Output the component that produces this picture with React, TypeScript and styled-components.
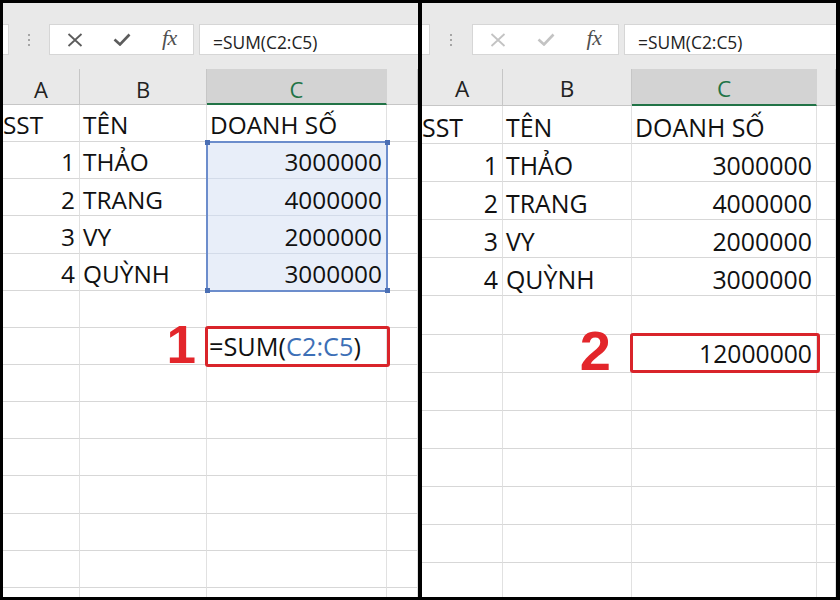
import React from 'react'
import styled, { createGlobalStyle, css } from 'styled-components'

const GlobalStyle = createGlobalStyle`
  html, body {
    margin: 0;
    padding: 0;
    background: #000;
  }
  * {
    box-sizing: border-box;
  }
`

const Frame = styled.div`
  width: 840px;
  height: 600px;
  display: flex;
  gap: 4px;
  padding: 3px 4px 3px 3px;
  background: #000;
  overflow: hidden;
`

const Panel = styled.div<{ $w: number }>`
  width: ${(p) => p.$w}px;
  flex: none;
  display: flex;
  flex-direction: column;
  background: #fff;
  overflow: hidden;
  font-family: 'Open Sans', 'Noto Sans', sans-serif;
  color: #111;
`

const FormulaBar = styled.div`
  height: 66px;
  flex: none;
  display: flex;
  align-items: flex-start;
  padding-top: 21px;
  background: #e9e9e9;
`

const NameStub = styled.div<{ $w: number }>`
  width: ${(p) => p.$w}px;
  height: 31px;
  flex: none;
  background: #fff;
  border: 1px solid #d6d6d6;
  border-left: none;
`

const Grip = styled.div<{ $w: number }>`
  width: ${(p) => p.$w}px;
  height: 31px;
  flex: none;
  display: flex;
  flex-direction: column;
  align-items: center;
  justify-content: center;
  gap: 3px;
  span {
    width: 2px;
    height: 2px;
    background: #a5a5a5;
  }
`

const IconBox = styled.div<{ $w: number }>`
  width: ${(p) => p.$w}px;
  height: 31px;
  flex: none;
  display: flex;
  align-items: center;
  padding-left: 1px;
  background: #fff;
  border: 1px solid #d6d6d6;
`

const IconSlot = styled.div`
  width: 48px;
  height: 100%;
  display: flex;
  align-items: center;
  justify-content: center;
`

const Fx = styled.span`
  font-family: 'Liberation Serif', 'Times New Roman', serif;
  font-style: italic;
  font-size: 22px;
  color: #505050;
  padding-bottom: 3px;
  letter-spacing: -0.5px;
`

const FormulaInput = styled.div`
  flex: 1;
  height: 31px;
  margin-left: 5px;
  display: flex;
  align-items: center;
  padding: 4px 0 0 13px;
  background: #fff;
  border: 1px solid #d6d6d6;
  border-right: none;
  font-size: 17.4px;
  color: #222;
  white-space: nowrap;
`

const HeaderRow = styled.div<{ $cols: string; $h: number }>`
  height: ${(p) => p.$h}px;
  flex: none;
  display: grid;
  grid-template-columns: ${(p) => p.$cols};
  background: #e9e9e9;
`

const ColHead = styled.div<{ $active?: boolean; $fs: number }>`
  display: flex;
  align-items: flex-end;
  justify-content: center;
  padding-bottom: 4.5px;
  font-size: ${(p) => p.$fs}px;
  line-height: 1;
  color: #222;
  border-right: 1px solid #c6c6c6;
  border-bottom: 1px solid #c6c6c6;
  ${(p) =>
    p.$active &&
    css`
      background: #d3d3d3;
      color: #217346;
      border-right-color: #d3d3d3;
      border-bottom: 2px solid #217346;
      padding-bottom: 3.5px;
    `}
`

const Sheet = styled.div<{ $cols: string; $row: number; $fs: number }>`
  flex: 1;
  min-height: 0;
  display: grid;
  grid-template-columns: ${(p) => p.$cols};
  grid-auto-rows: ${(p) => p.$row}px;
  align-content: start;
  overflow: hidden;
  font-size: ${(p) => p.$fs}px;
`

const Cell = styled.div<{
  $r: number
  $c: number
  $align?: 'left' | 'right'
  $padL?: number
  $sel?: boolean
}>`
  grid-row: ${(p) => p.$r};
  grid-column: ${(p) => p.$c};
  position: relative;
  display: flex;
  align-items: flex-end;
  justify-content: ${(p) => (p.$align === 'right' ? 'flex-end' : 'flex-start')};
  padding: 0 4px 3.5px ${(p) => p.$padL ?? 3}px;
  line-height: 1;
  white-space: nowrap;
  border-right: 1px solid #e1e1e1;
  border-bottom: 1px solid #d7d7d7;
  ${(p) =>
    p.$sel &&
    css`
      background: #e8eef9;
      border-bottom-color: #d3dbe9;
    `}
`

const Selection = styled.div<{ $area: string }>`
  grid-area: ${(p) => p.$area};
  position: relative;
  z-index: 1;
  margin: -1px -1px -1px -1px;
  border: 2px solid #6c8dcc;
  pointer-events: none;
`

const Handle = styled.span<{ $v: 'top' | 'bottom'; $h: 'left' | 'right' }>`
  position: absolute;
  ${(p) => p.$v}: -3.5px;
  ${(p) => p.$h}: -3.5px;
  width: 5px;
  height: 5px;
  background: #4b6fb4;
`

const Marker = styled.span<{ $fs: number; $mr: number }>`
  position: relative;
  z-index: 2;
  align-self: center;
  margin-right: ${(p) => p.$mr}px;
  font-family: 'Liberation Sans', Arial, sans-serif;
  font-weight: 700;
  font-size: ${(p) => p.$fs}px;
  line-height: 1;
  color: #e3262b;
`

const RedFrame = styled.span<{ $inset: string }>`
  position: absolute;
  inset: ${(p) => p.$inset};
  z-index: 2;
  border: 3px solid #d9242a;
  border-radius: 3px;
  pointer-events: none;
`

const EditText = styled.span<{ $fs: number }>`
  font-size: ${(p) => p.$fs}px;
  padding-bottom: 1px;
`

const Ref = styled.span`
  color: #3d6fb6;
`

const CrossIcon = ({ color }: { color: string }) => (
  <svg width="16" height="14" viewBox="0 0 16 14">
    <path d="M1.5 1 L14.5 13 M14.5 1 L1.5 13" stroke={color} strokeWidth="1.8" fill="none" />
  </svg>
)

const CheckIcon = ({ color }: { color: string }) => (
  <svg width="18" height="13" viewBox="0 0 18 13">
    <path d="M1.5 6.5 L7 11.5 L16.5 1.5" stroke={color} strokeWidth="2.6" fill="none" strokeLinejoin="miter" />
  </svg>
)

type PanelConfig = {
  w: number
  stub: number
  grip: number
  iconBox: number
  iconColor: string
  cols: string
  headH: number
  headFs: number
  rowH: number
  fs: number
  rows: number
  selection?: boolean
  marker: string
  markerFs: number
  markerMr: number
  frameInset: string
  result: React.ReactNode
  resultAlign: 'left' | 'right'
  resultPadL: number
}

const data = [
  ['SST', 'TÊN', 'DOANH SỐ'],
  ['1', 'THẢO', '3000000'],
  ['2', 'TRANG', '4000000'],
  ['3', 'VY', '2000000'],
  ['4', 'QUỲNH', '3000000'],
]

const SheetPanel: React.FC<{ cfg: PanelConfig }> = ({ cfg }) => {
  const cells: React.ReactNode[] = []
  for (let r = 1; r <= cfg.rows; r++) {
    const row = data[r - 1]
    for (let c = 1; c <= 4; c++) {
      const key = `${r}-${c}`
      if (row && c < 4) {
        const isNum = r > 1 && c !== 2
        const sel = cfg.selection && r > 1 && c === 3
        cells.push(
          <Cell
            key={key}
            $r={r}
            $c={c}
            $align={isNum ? 'right' : 'left'}
            $padL={c === 1 ? 0 : 3}
            $sel={sel}
          >
            {row[c - 1]}
          </Cell>
        )
      } else if (r === 7 && c === 2) {
        cells.push(
          <Cell key={key} $r={r} $c={c} $align="right">
            <Marker $fs={cfg.markerFs} $mr={cfg.markerMr}>
              {cfg.marker}
            </Marker>
          </Cell>
        )
      } else if (r === 7 && c === 3) {
        cells.push(
          <Cell key={key} $r={r} $c={c} $align={cfg.resultAlign} $padL={cfg.resultPadL}>
            {cfg.result}
            <RedFrame $inset={cfg.frameInset} />
          </Cell>
        )
      } else {
        cells.push(<Cell key={key} $r={r} $c={c} />)
      }
    }
  }

  return (
    <Panel $w={cfg.w}>
      <FormulaBar>
        <NameStub $w={cfg.stub} />
        <Grip $w={cfg.grip}>
          <span />
          <span />
          <span />
        </Grip>
        <IconBox $w={cfg.iconBox}>
          <IconSlot>
            <CrossIcon color={cfg.iconColor} />
          </IconSlot>
          <IconSlot>
            <CheckIcon color={cfg.iconColor} />
          </IconSlot>
          <IconSlot>
            <Fx>fx</Fx>
          </IconSlot>
        </IconBox>
        <FormulaInput>=SUM(C2:C5)</FormulaInput>
      </FormulaBar>
      <HeaderRow $cols={cfg.cols} $h={cfg.headH}>
        <ColHead $fs={cfg.headFs}>A</ColHead>
        <ColHead $fs={cfg.headFs}>B</ColHead>
        <ColHead $fs={cfg.headFs} $active>
          C
        </ColHead>
        <ColHead $fs={cfg.headFs} />
      </HeaderRow>
      <Sheet $cols={cfg.cols} $row={cfg.rowH} $fs={cfg.fs}>
        {cells}
        {cfg.selection && (
          <Selection $area="2 / 3 / 6 / 4">
            <Handle $v="top" $h="left" />
            <Handle $v="top" $h="right" />
            <Handle $v="bottom" $h="left" />
            <Handle $v="bottom" $h="right" />
          </Selection>
        )}
      </Sheet>
    </Panel>
  )
}

const leftPanel: PanelConfig = {
  w: 415,
  stub: 6,
  grip: 40,
  iconBox: 145,
  iconColor: '#5c5c5c',
  cols: '77px 127px 180px 1fr',
  headH: 36,
  headFs: 22,
  rowH: 37.15,
  fs: 24.4,
  rows: 14,
  selection: true,
  marker: '1',
  markerFs: 53,
  markerMr: 6,
  frameInset: '-2px -4px -3px -2px',
  result: (
    <EditText $fs={25.3}>
      =SUM(<Ref>C2:C5</Ref>)
    </EditText>
  ),
  resultAlign: 'left',
  resultPadL: 2,
}

const rightPanel: PanelConfig = {
  w: 414,
  stub: 8,
  grip: 42,
  iconBox: 147,
  iconColor: '#c3c3c3',
  cols: '81px 129px 185px 1fr',
  headH: 37,
  headFs: 22.5,
  rowH: 38.1,
  fs: 24.9,
  rows: 13,
  marker: '2',
  markerFs: 56,
  markerMr: 16,
  frameInset: '-2px -4px -1px -2px',
  result: <EditText $fs={24.7}>12000000</EditText>,
  resultAlign: 'right',
  resultPadL: 3,
}

const App: React.FC = () => (
  <>
    <GlobalStyle />
    <Frame>
      <SheetPanel cfg={leftPanel} />
      <SheetPanel cfg={rightPanel} />
    </Frame>
  </>
)

export default App
